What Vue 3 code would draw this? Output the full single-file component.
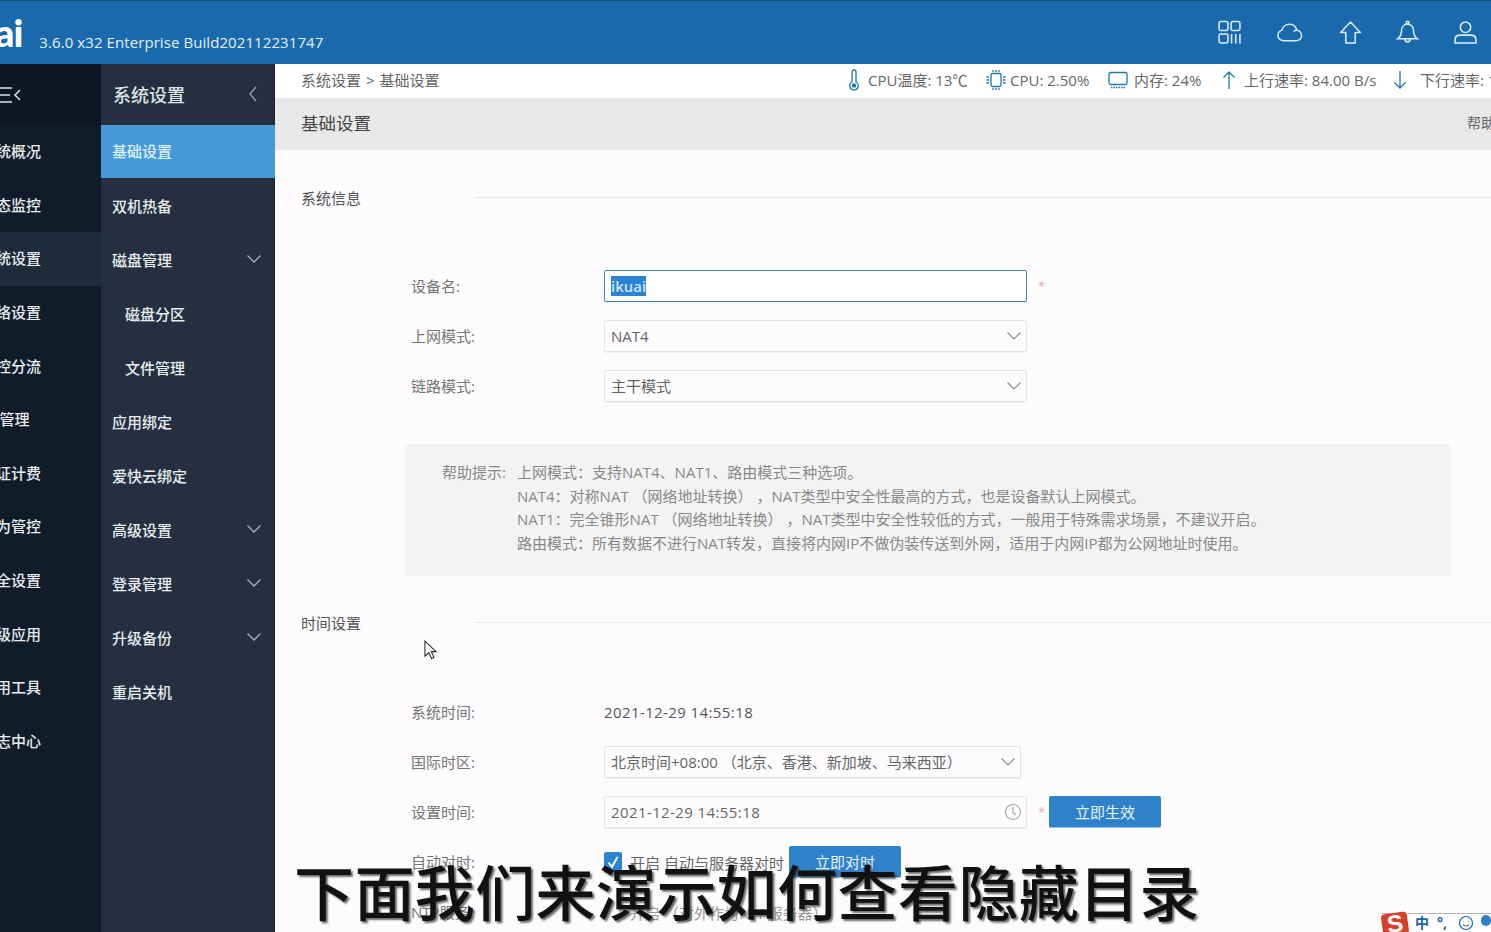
<template>
  <div class="page">
    <header class="topbar">
      <div class="brand">
        <span class="logo">ai</span>
        <span class="version">3.6.0 x32 Enterprise Build202112231747</span>
      </div>
      <div class="top-icons">
        <svg viewBox="0 0 24 24" class="ti">
          <rect x="2" y="1.500" width="8.500" height="8.500" rx="1.500" /><rect x="13.500" y="1.500" width="8.500" height="8.500" rx="1.500" />
          <rect x="2" y="13.500" width="8.500" height="8.500" rx="1.500" /><path d="M14 13.500v9M18 13.500v9M22 13.500v9" />
        </svg>
        <svg viewBox="0 0 28 24" class="ti cloud">
          <path d="M8 20.500C4.500 20.500 2 18 2 15c0-2.500 1.500-4.500 4-5.500C7 6 10.500 3.500 14 3.500c3.600 0 6.500 2.300 7.600 6 2.900.7 4.900 3 4.900 5.600 0 3-2.500 5.400-5.500 5.400zM21.600 9.500c-1.300.2-2.400.7-3.300 1.500" />
        </svg>
        <svg viewBox="0 0 24 24" class="ti">
          <path d="M12 2 2.500 12H7.500v10h9V12h5z" stroke-linejoin="round" />
        </svg>
        <svg viewBox="0 0 24 24" class="ti bell">
          <path d="M12 4c-3.800 0-5.800 3-5.800 6.500 0 3.500-1.200 5.500-3.700 7.500h19c-2.500-2-3.700-4-3.700-7.500C17.800 7 15.800 4 12 4zM9.500 18.500a2.500 2.500 0 0 0 5 0" />
          <circle cx="12" cy="2.500" r="1.300" />
        </svg>
        <svg viewBox="0 0 24 24" class="ti">
          <circle cx="12" cy="7" r="5" /><path d="M2 22v-3c0-3 2-4.500 5-4.500h10c3 0 5 1.500 5 4.500v3z" />
        </svg>
      </div>
    </header>

    <div class="body">
      <nav class="nav-main">
        <div class="nav-toggle">
          <svg viewBox="0 0 22 20" class="toggle-icon"><path d="M-2 3h14M-2 10h12M-2 17h14M20 5l-5 5 5 5" /></svg>
        </div>
        <div v-for="item in mainNav" :key="item" class="nav-main-item" :class="{ current: item === '系统设置' }">
          <span>{{ item }}</span>
        </div>
      </nav>

      <nav class="nav-sub">
        <div class="nav-sub-head">
          <span>系统设置</span>
          <svg viewBox="0 0 10 18" class="back"><path d="M8 2 2 9l6 7" /></svg>
        </div>
        <div
          v-for="item in subNav"
          :key="item.name"
          class="nav-sub-item"
          :class="{ active: item.active, child: item.child }"
        >
          <span>{{ item.name }}</span>
          <svg v-if="item.more" viewBox="0 0 16 10" class="more"><path d="M1.500 1.500 8 8l6.500-6.500" /></svg>
        </div>
      </nav>

      <main class="main">
        <div class="statbar">
          <div class="crumb">系统设置<span class="sep">&gt;</span>基础设置</div>
          <div class="stats">
            <svg viewBox="0 0 12 22" class="si therm">
              <path d="M4 3a2 2 0 0 1 4 0v10a4.300 4.300 0 1 1-4 0z" /><circle cx="6" cy="16.500" r="1.600" class="fill" />
            </svg>
            <span class="stat s1">CPU温度: 13℃</span>
            <svg viewBox="0 0 22 22" class="si chip">
              <rect x="6" y="4.500" width="10" height="13" rx="1.500" />
              <path d="M8 1v2M11 1v2M14 1v2M8 19v2M11 19v2M14 19v2M1.500 8h2.500M1.500 11h2.500M1.500 14h2.500M18 8h2.500M18 11h2.500M18 14h2.500" />
            </svg>
            <span class="stat s2">CPU: 2.50%</span>
            <svg viewBox="0 0 22 20" class="si mem">
              <rect x="2" y="2.500" width="18" height="12" rx="1.500" /><path d="M4 17.500h14" stroke-dasharray="1.500 1" />
            </svg>
            <span class="stat s3">内存: 24%</span>
            <svg viewBox="0 0 14 20" class="si arrow"><path d="M7 19V2M1.500 7.500 7 2l5.500 5.500" /></svg>
            <span class="stat s4">上行速率: 84.00 B/s</span>
            <svg viewBox="0 0 14 20" class="si arrow"><path d="M7 1v17M1.500 12.500 7 18l5.500-5.500" /></svg>
            <span class="stat s5">下行速率: 1</span>
          </div>
        </div>

        <div class="titlebar">
          <span class="title">基础设置</span>
          <span class="help">帮助</span>
        </div>

        <section class="section first">
          <div class="section-head"><span>系统信息</span><i></i></div>
          <div class="form first-form">
            <div class="row">
              <label>设备名:</label>
              <div class="field focus"><span class="selected">ikuai</span></div>
              <em class="star">*</em>
            </div>
            <div class="row">
              <label>上网模式:</label>
              <div class="field">
                <span>NAT4</span>
                <svg viewBox="0 0 16 10" class="caret"><path d="M1.500 1.500 8 8l6.500-6.500" /></svg>
              </div>
            </div>
            <div class="row">
              <label>链路模式:</label>
              <div class="field">
                <span>主干模式</span>
                <svg viewBox="0 0 16 10" class="caret"><path d="M1.500 1.500 8 8l6.500-6.500" /></svg>
              </div>
            </div>
          </div>
          <div class="hint">
            <div class="hint-label">帮助提示:</div>
            <div class="hint-text">
              <p v-for="line in hints" :key="line">{{ line }}</p>
            </div>
          </div>
        </section>

        <section class="section second">
          <div class="section-head"><span>时间设置</span><i></i></div>
          <div class="form time-form">
            <div class="row">
              <label>系统时间:</label>
              <span class="value">2021-12-29 14:55:18</span>
            </div>
            <div class="row">
              <label>国际时区:</label>
              <div class="field narrow">
                <span>北京时间+08:00 （北京、香港、新加坡、马来西亚）</span>
                <svg viewBox="0 0 16 10" class="caret"><path d="M1.500 1.500 8 8l6.500-6.500" /></svg>
              </div>
            </div>
            <div class="row">
              <label>设置时间:</label>
              <div class="field">
                <span class="date">2021-12-29 14:55:18</span>
                <svg viewBox="0 0 18 18" class="clock"><circle cx="9" cy="9" r="7.500" /><path d="M9 4v5.500l3 2.500" /></svg>
              </div>
              <em class="star">*</em>
              <button class="btn">立即生效</button>
            </div>
            <div class="row">
              <label>自动对时:</label>
              <span class="check"><svg viewBox="0 0 18 18"><path d="M4.500 9.500 8 14l5.500-10" /></svg></span>
              <span class="check-text">开启 自动与服务器对时</span>
              <button class="btn">立即对时</button>
            </div>
            <div class="row">
              <label>NTP服务:</label>
              <span class="ntp">开启 （对外作为NTP服务器）</span>
            </div>
          </div>
        </section>
      </main>
    </div>

    <svg class="cursor" viewBox="0 0 16 22">
      <path d="M1 1v16l4.200-3.800 2.800 6.300 2.600-1.200-2.800-6.100H13z" />
    </svg>

    <div class="subtitle">下面我们来演示如何查看隐藏目录</div>

    <div class="ime">
      <span class="ime-logo">S</span>
      <span class="ime-zh">中</span>
      <span class="ime-dot">°,</span>
      <svg viewBox="0 0 16 16" class="ime-face"><circle cx="8" cy="8" r="6.500" /><path d="M5 9.500c1.500 2 4.500 2 6 0M5.500 6v.5M10.500 6v.5" /></svg>
      <svg viewBox="0 0 12 16" class="ime-mic"><rect x="1" y="0" width="10" height="11" rx="5" /></svg>
    </div>
  </div>
</template>

<script setup>
const mainNav = ['系统概况', '状态监控', '系统设置', '网络设置', '流控分流', 'AP管理', '认证计费', '行为管控', '安全设置', '高级应用', '实用工具', '日志中心']

const subNav = [
  { name: '基础设置', active: true },
  { name: '双机热备' },
  { name: '磁盘管理', more: true },
  { name: '磁盘分区', child: true },
  { name: '文件管理', child: true },
  { name: '应用绑定' },
  { name: '爱快云绑定' },
  { name: '高级设置', more: true },
  { name: '登录管理', more: true },
  { name: '升级备份', more: true },
  { name: '重启关机' }
]

const hints = [
  '上网模式：支持NAT4、NAT1、路由模式三种选项。',
  'NAT4：对称NAT （网络地址转换） ，NAT类型中安全性最高的方式，也是设备默认上网模式。',
  'NAT1：完全锥形NAT （网络地址转换） ，NAT类型中安全性较低的方式，一般用于特殊需求场景，不建议开启。',
  '路由模式：所有数据不进行NAT转发，直接将内网IP不做伪装传送到外网，适用于内网IP都为公网地址时使用。'
]
</script>

<style>
html, body {
  margin: 0;
  background: #fdfbfd;
}
</style>

<style scoped>
.page {
  position: relative;
  width: 1491px;
  height: 932px;
  overflow: hidden;
  font-family: "Open Sans", "Noto Sans CJK SC", sans-serif;
  font-size: 15px;
  color: #666;
  background: #fdfbfd;
}

.topbar {
  height: 63px;
  border-top: 1px solid #14527f;
  background: #1b69ad;
  display: flex;
  justify-content: space-between;
  align-items: center;
}
.brand {
  display: flex;
  align-items: flex-end;
  height: 100%;
}
.logo {
  font-family: "Lato", sans-serif;
  font-weight: 900;
  font-size: 38px;
  line-height: 38px;
  color: #fff;
  margin-left: -5px;
  padding-bottom: 13px;
  letter-spacing: -1px;
}
.version {
  font-family: "Open Sans", sans-serif;
  font-size: 15px;
  line-height: 20px;
  letter-spacing: 0.08px;
  color: #e4f1f8;
  margin-left: 17px;
  padding-bottom: 12px;
}
.top-icons {
  display: flex;
  align-items: center;
  gap: 32px;
  padding-right: 13px;
}
.ti {
  width: 25px;
  height: 25px;
  fill: none;
  stroke: #d7eef8;
  stroke-width: 1.500;
}
.ti:first-child {
  margin-right: 2px;
}
.cloud {
  width: 27px;
  margin-right: 3px;
}
.bell {
  margin-right: 1px;
}

.body {
  display: flex;
  height: 868px;
}

.nav-main {
  width: 101px;
  flex: none;
  background: #111c2a;
}
.nav-toggle {
  height: 61px;
  display: flex;
  align-items: center;
  background: #0d1622;
}
.toggle-icon {
  width: 22px;
  height: 20px;
  fill: none;
  stroke: #dfe3e7;
  stroke-width: 1.500;
  overflow: visible;
}
.nav-main-item {
  height: 53.600px;
  display: flex;
  align-items: center;
  padding-bottom: 2px;
  box-sizing: border-box;
  color: #e9edf0;
  font-weight: 500;
  white-space: nowrap;
}
.nav-main-item span {
  margin-left: -19px;
}
.nav-main-item.current {
  background: #1e2b3b;
}

.nav-sub {
  width: 174px;
  flex: none;
  background: #252f3f;
  border-right: 1px solid #1b2330;
  box-sizing: border-box;
  color: #e9edf0;
  font-weight: 500;
}
.nav-sub-head {
  height: 61px;
  display: flex;
  align-items: center;
  justify-content: space-between;
  box-sizing: border-box;
  padding: 0 16px 2px 12px;
  font-size: 18px;
  color: #dfe3e7;
}
.back {
  width: 10px;
  height: 18px;
  fill: none;
  stroke: #9aa3ae;
  stroke-width: 1.300;
}
.nav-sub-item {
  height: 54px;
  display: flex;
  align-items: center;
  justify-content: space-between;
  box-sizing: border-box;
  padding: 0 12px 0 11px;
}
.nav-sub-item.active {
  height: 53px;
  background: #459bd5;
  margin-right: -1px;
  padding-bottom: 2px;
  color: #dff2fb;
}
.nav-sub-item.child {
  padding-left: 24px;
}
.more {
  width: 16px;
  height: 10px;
  fill: none;
  stroke: #a9b2bb;
  stroke-width: 1.300;
}

.main {
  flex: 1;
  min-width: 0;
  overflow: hidden;
}
.statbar {
  height: 34px;
  display: flex;
  align-items: center;
  box-sizing: border-box;
  padding: 0 0 3px 26px;
  background: #fff;
  white-space: nowrap;
}
.crumb {
  width: 139px;
  flex: none;
}
.sep {
  margin: 0 5px;
}
.stats {
  display: flex;
  align-items: center;
  flex: none;
  margin-left: 408px;
}
.stat {
  flex: none;
}
.s1 { width: 100px; }
.s2 { width: 82px; }
.s3 { width: 68px; }
.s4 { width: 133px; }
.si {
  flex: none;
  fill: none;
  stroke: #1c7ca0;
  stroke-width: 1.300;
}
.fill {
  fill: #1c7ca0;
}
.therm { width: 12px; height: 22px; margin-right: 8px; }
.chip { width: 22px; height: 22px; margin-left: 17px; margin-right: 3px; }
.mem { width: 22px; height: 20px; margin-left: 15px; margin-right: 5px; }
.arrow { width: 14px; height: 20px; }
.s3 + .arrow { margin-left: 20px; margin-right: 8px; }
.s4 + .arrow { margin-left: 16px; margin-right: 13px; }

.titlebar {
  height: 52px;
  display: flex;
  align-items: center;
  justify-content: space-between;
  padding-left: 26px;
  margin-right: -6px;
  background: #e8e8e9;
}
.title {
  font-size: 17.500px;
  color: #444;
  margin-top: -4px;
}
.help {
  width: 30px;
  font-size: 14px;
  white-space: nowrap;
  margin-top: -4px;
}

.section-head {
  display: flex;
  align-items: center;
  height: 20px;
  padding-left: 26px;
  color: #555;
}
.section-head span {
  width: 174px;
  flex: none;
  margin-top: -1px;
}
.section-head i {
  flex: 1;
  height: 1px;
  background: #e9e9e9;
  margin-top: -2px;
}
.section.first {
  padding-top: 38px;
}
.section.second {
  padding-top: 37px;
}
.first-form {
  padding-top: 53px;
}
.time-form {
  padding-top: 54px;
}
.row {
  height: 50px;
  display: flex;
  align-items: center;
  padding-left: 136px;
}
.row label {
  width: 193px;
  flex: none;
  color: #777;
  margin-top: -2px;
}
.field {
  width: 423px;
  height: 32px;
  flex: none;
  box-sizing: border-box;
  display: flex;
  align-items: center;
  justify-content: space-between;
  padding: 0 4px 1px 6px;
  border: 1px solid #e6e4e6;
  border-radius: 2px;
  background: #fdfbfd;
  box-shadow: 0 1px 1px #eee;
}
.field.narrow {
  width: 417px;
}
.field.focus {
  border-color: #3d8aa6;
  justify-content: flex-start;
  background: #fff;
}
.selected {
  background: #2b83d3;
  color: #cbe6f7;
  font-weight: 600;
}
.date,
.value {
  letter-spacing: 0.4px;
}
.caret {
  width: 16px;
  height: 10px;
  fill: none;
  stroke: #8d8d8d;
  stroke-width: 1.200;
}
.clock {
  width: 18px;
  height: 18px;
  fill: none;
  stroke: #a5a5a5;
  stroke-width: 1.100;
}
.star {
  font-style: normal;
  font-size: 13px;
  color: #e8a8ae;
  margin-left: 11px;
  width: 11px;
}
.value {
  color: #555;
}
.btn {
  width: 112px;
  height: 32px;
  border: 0;
  border-bottom: 1px solid #8cc4e8;
  border-radius: 2px;
  background: #2e82c9;
  color: #e8f4fb;
  font: inherit;
  padding: 0;
}
.check {
  width: 18px;
  height: 20px;
  flex: none;
  background: #2b83d3;
  border-radius: 2px;
}
.check svg {
  display: block;
  width: 18px;
  height: 20px;
  fill: none;
  stroke: #fff;
  stroke-width: 2;
}
.check-text {
  width: 159px;
  flex: none;
  margin-left: 8px;
  white-space: nowrap;
}
.ntp {
  margin-left: 26px;
  color: #999;
}

.hint {
  margin: 33px 41px 0 130px;
  height: 132px;
  padding: 17px 0 0 37px;
  box-sizing: border-box;
  display: flex;
  background: #f4f3f3;
  color: #888;
  line-height: 23.700px;
}
.hint-label {
  width: 75px;
  flex: none;
}
.hint-text p {
  margin: 0;
  white-space: nowrap;
}

.cursor {
  position: absolute;
  left: 424px;
  top: 640px;
  width: 15px;
  height: 21px;
  fill: #fff;
  stroke: #222;
  stroke-width: 1.100;
}

.subtitle {
  position: absolute;
  left: 294px;
  top: 847px;
  font-family: "Noto Sans CJK SC", sans-serif;
  font-size: 60px;
  line-height: 86px;
  font-weight: 500;
  letter-spacing: 0.4px;
  color: #111;
  white-space: nowrap;
  text-shadow: 2px 2px 2px rgba(60, 60, 60, 0.75);
}

.ime {
  position: absolute;
  left: 1382px;
  top: 913px;
  width: 109px;
  height: 19px;
  display: flex;
  align-items: center;
  background: #fff;
  border-top: 1px solid #b6b6b6;
  box-sizing: border-box;
}
.ime-logo {
  width: 26px;
  height: 22px;
  flex: none;
  margin-top: 2px;
  border-radius: 4px;
  background: #d8402a;
  color: #fff;
  font-family: "Liberation Sans", sans-serif;
  font-weight: 700;
  font-size: 24px;
  line-height: 22px;
  text-align: center;
  transform: rotate(-8deg);
}
.ime-zh {
  margin-left: 7px;
  color: #1c62a8;
  font-size: 14px;
  font-weight: 700;
  line-height: 18px;
}
.ime-dot {
  margin-left: 8px;
  color: #1c62a8;
  font-size: 14px;
  font-weight: 700;
  line-height: 18px;
}
.ime-face {
  width: 16px;
  height: 16px;
  flex: none;
  margin-left: 11px;
  fill: none;
  stroke: #1c62a8;
  stroke-width: 1.200;
}
.ime-mic {
  width: 12px;
  height: 16px;
  flex: none;
  margin-left: 6px;
  fill: #2d7fc7;
}
</style>
